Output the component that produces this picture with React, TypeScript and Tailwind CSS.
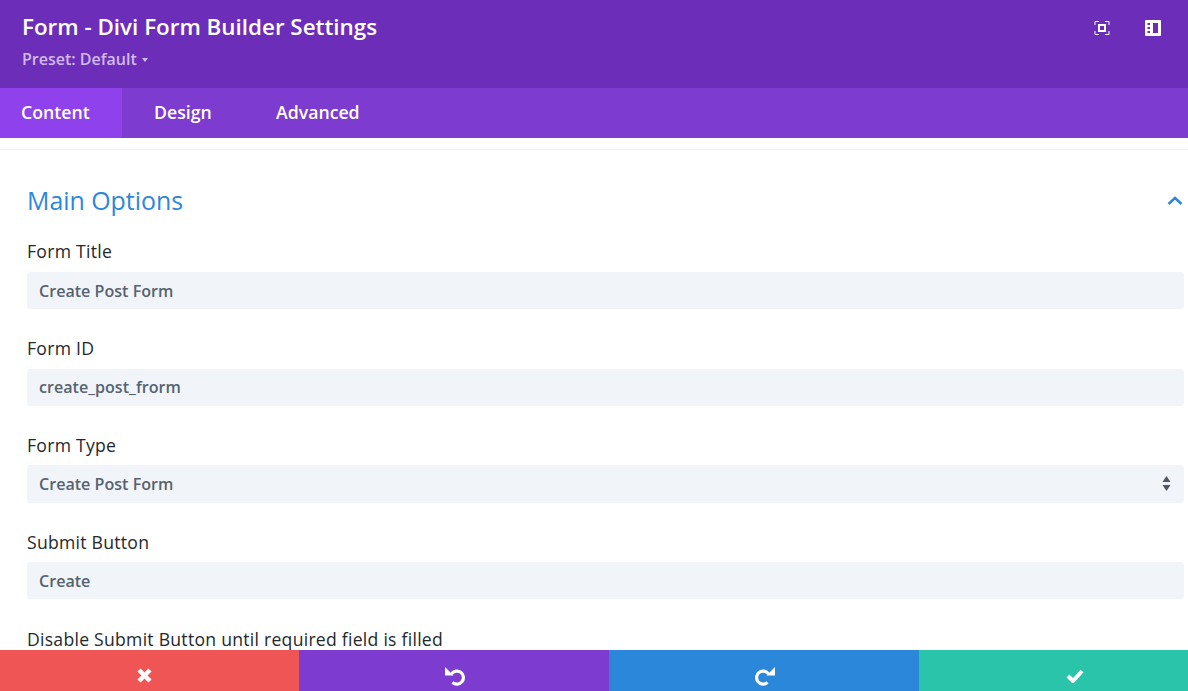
import React from "react";

const fields = [
  { label: "Form Title", value: "Create Post Form" },
  { label: "Form ID", value: "create_post_frorm" },
  { label: "Form Type", value: "Create Post Form", select: true },
  { label: "Submit Button", value: "Create" },
];

const Field = ({ label, value, select }: { label: string; value: string; select?: boolean }) => (
  <div className="mb-[27.85px]">
    <label className="block text-[17.6px] leading-[22px] font-medium tracking-[0.26px] text-[#23282d] mb-[9.5px]">{label}</label>
    <div className="relative h-[37.4px] rounded-[3px] bg-[#f1f5f9] px-3 flex items-center text-[16.1px] font-semibold text-[#566270]">
      {value}
      {select && (
        <svg className="absolute right-[13px] top-[11px]" width="9" height="15" viewBox="0 0 9 15" fill="#4c5866">
          <path d="M4.5 0 L8.5 6 H0.5 Z" />
          <path d="M4.5 15 L8.5 9 H0.5 Z" />
        </svg>
      )}
    </div>
  </div>
);

export default function App() {
  return (
    <div className="flex h-[691px] w-[1188px] flex-col overflow-hidden bg-white font-['Open_Sans',sans-serif]">
      <header className="flex h-[88px] shrink-0 items-start justify-between bg-[#6c2eb9] pl-[22px] pr-[27px]">
        <div>
          <h1 className="mt-[12px] text-[22.4px] leading-[30px] font-semibold text-white">Form - Divi Form Builder Settings</h1>
          <div className="mt-[6px] flex items-center text-[16px] leading-[22px] font-semibold text-[#d0bbea]">
            Preset: Default
            <svg className="ml-[5px] mt-[2px]" width="6" height="4" viewBox="0 0 6 4" fill="#d0bbea">
              <path d="M0 0 H6 L3 4 Z" />
            </svg>
          </div>
        </div>
        <div className="mt-[20px] flex items-center gap-[35px]">
          <svg width="16" height="16" viewBox="0 0 16 16" fill="none" stroke="white">
            <path d="M1 5 V1.5 H5 M11 1.5 H15 V5 M15 11 V14.5 H11 M5 14.5 H1 V11" strokeWidth="1" />
            <rect x="5" y="5" width="6" height="6" strokeWidth="2" />
          </svg>
          <svg width="16" height="16" viewBox="0 0 16 16" fill="white">
            <path fillRule="evenodd" d="M1 0 H15 A1 1 0 0 1 16 1 V15 A1 1 0 0 1 15 16 H1 A1 1 0 0 1 0 15 V1 A1 1 0 0 1 1 0 Z M8 3 V13 H13 V3 Z M2.5 3 V5 H5 V3 Z M2.5 7 V9 H5 V7 Z M2.5 11 V13 H5 V11 Z" />
          </svg>
        </div>
      </header>

      <nav className="flex h-[50px] shrink-0 text-[17.7px] font-semibold text-white bg-[#7d3bcf]">
        <div className="flex w-[122px] items-center pl-[21px] pb-[1px] bg-[#8f42ec]">Content</div>
        <div className="flex w-[154px] items-center pl-[32px] pb-[1px]">Design</div>
        <div className="flex items-center pb-[1px]">Advanced</div>
      </nav>

      <main className="min-h-0 flex-1 overflow-hidden pl-[27px] pr-[4px]">
        <div className="-ml-[27px] -mr-[4px] mt-[11px] h-px bg-[#f1f1f1]" />
        <div className="mt-[34px] mb-[23.4px] flex items-center justify-between pr-[1px]">
          <h2 className="text-[24.9px] leading-[33px] font-normal text-[#2b87da]">Main Options</h2>
          <svg width="16" height="10" viewBox="0 0 16 10" fill="none" stroke="#2b87da" strokeWidth="2.4">
            <path d="M1.5 8 L8 2 L14.5 8" />
          </svg>
        </div>
        {fields.map((f) => (
          <Field key={f.label} {...f} />
        ))}
        <label className="block pt-[0.6px] text-[17.6px] leading-[22px] font-medium tracking-[0.26px] text-[#23282d]">
          Disable Submit Button until required field is filled
        </label>
      </main>

      <footer className="flex h-[41px] shrink-0">
        <div className="flex w-[299px] items-center justify-center bg-[#ef5555] pt-[10px] pr-[10px]">
          <svg width="15" height="15" viewBox="0 0 15 15" stroke="white" strokeWidth="4.4">
            <path d="M2 2 L13 13 M13 2 L2 13" />
          </svg>
        </div>
        <div className="flex w-[310px] items-center justify-center bg-[#7d3bcf] pt-[11px] pl-[2px]">
          <svg width="20" height="20" viewBox="0 0 20 20" fill="none" stroke="white" strokeWidth="3.2">
            <path d="M6.5 8 A6.5 6.5 0 1 1 7.5 16.3" />
            <path d="M0 1 V9.5 H8.5 Z" fill="white" stroke="none" />
          </svg>
        </div>
        <div className="flex w-[310px] items-center justify-center bg-[#2b87da] pt-[11px] pl-[2px]">
          <svg width="20" height="20" viewBox="0 0 20 20" fill="none" stroke="white" strokeWidth="3.2">
            <path d="M13.5 8 A6.5 6.5 0 1 0 12.5 16.3" />
            <path d="M20 1 V9.5 H11.5 Z" fill="white" stroke="none" />
          </svg>
        </div>
        <div className="flex w-[269px] items-center justify-center bg-[#29c4a9] pt-[11px] pl-[42px]">
          <svg width="18" height="14" viewBox="0 0 18 14" fill="none" stroke="white" strokeWidth="4">
            <path d="M2 7 L7 12 L16 2" />
          </svg>
        </div>
      </footer>
    </div>
  );
}
